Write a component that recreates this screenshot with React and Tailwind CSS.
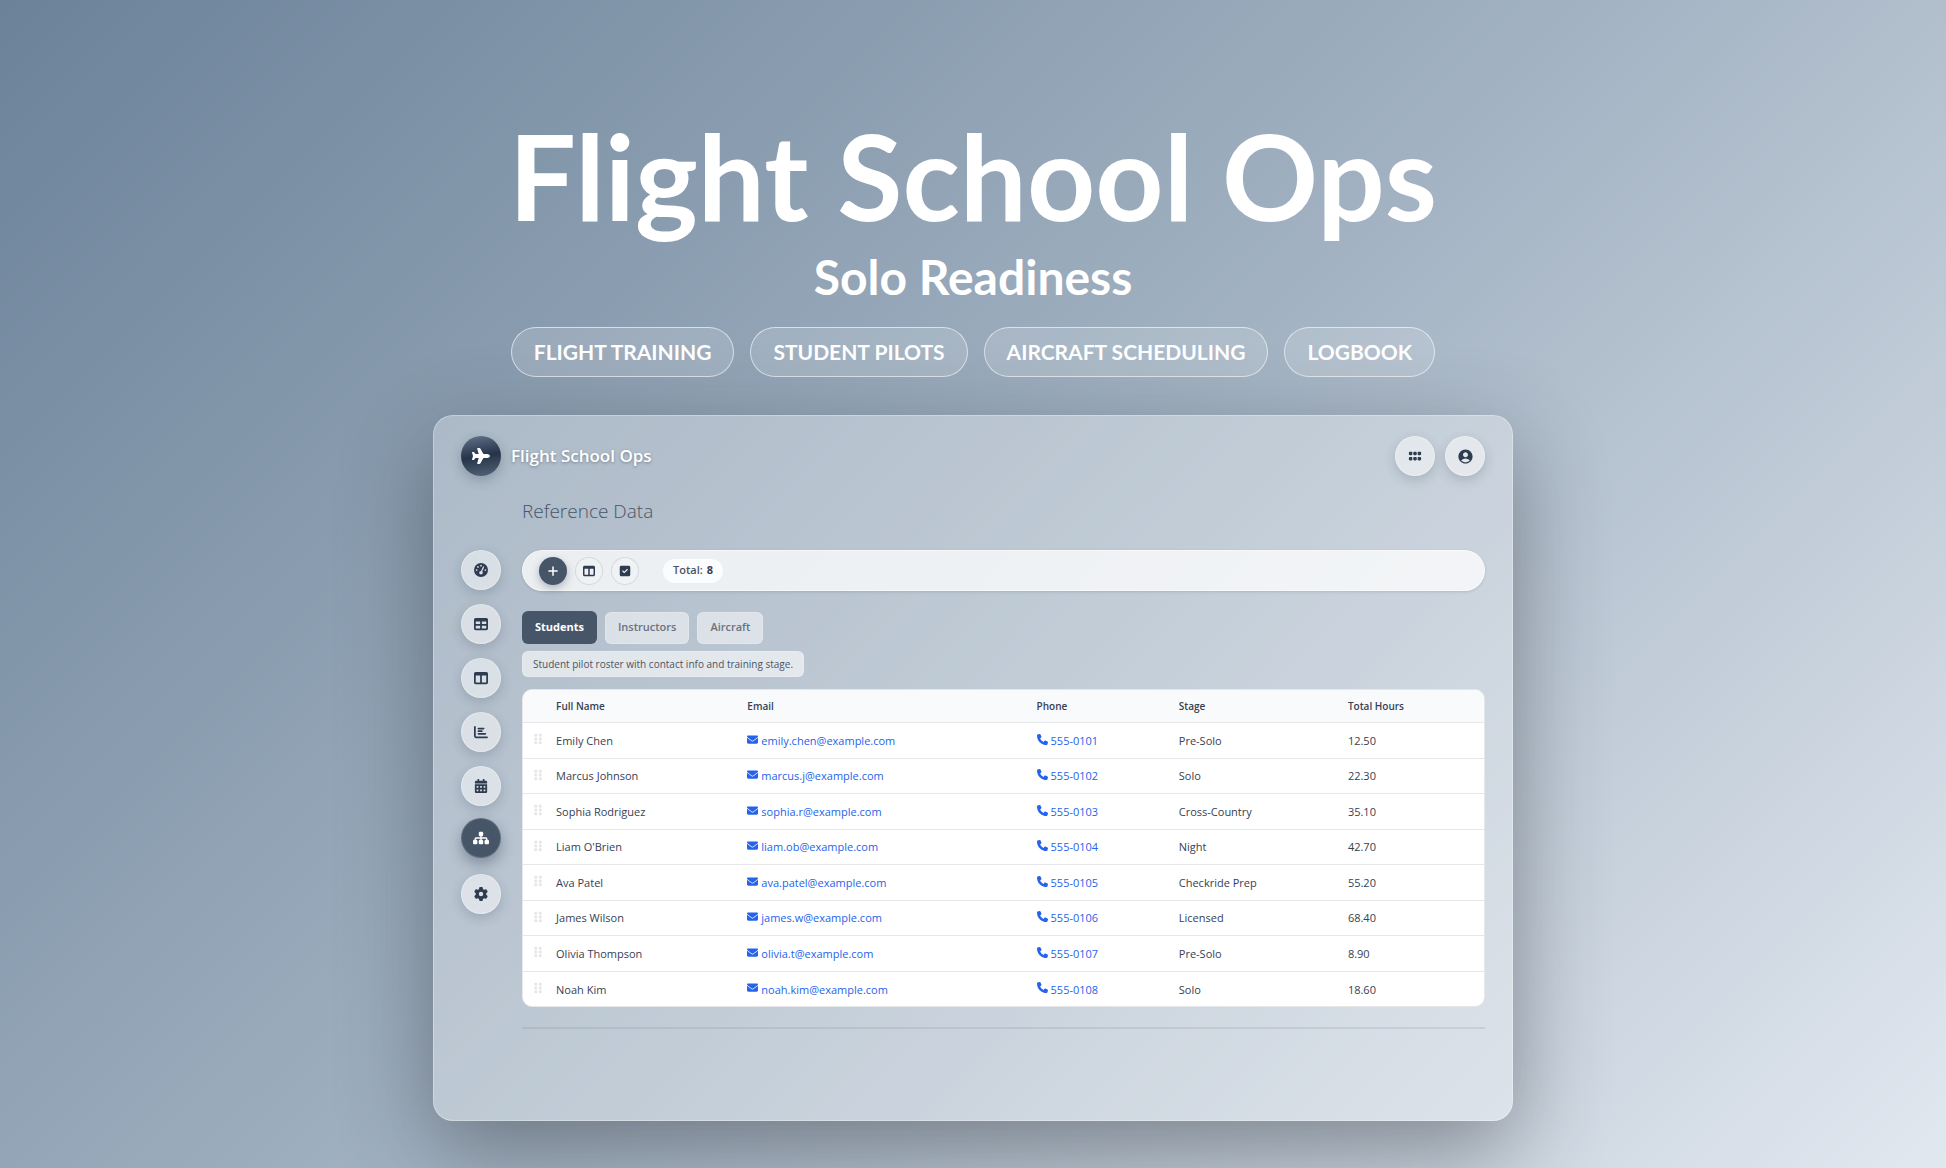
import { FaGaugeHigh, FaTable, FaTableColumns, FaChartBar, FaSitemap, FaGear, FaPlane, FaPlus, FaSquareCheck, FaGripVertical, FaEnvelope, FaPhone, FaGrip } from "react-icons/fa6";
import { FaCalendarAlt } from "react-icons/fa";
import { MdAccountCircle } from "react-icons/md";

const tags = ["FLIGHT TRAINING", "STUDENT PILOTS", "AIRCRAFT SCHEDULING", "LOGBOOK"];

const navItems = [
  { label: "Dashboard", Icon: FaGaugeHigh },
  { label: "Table", Icon: FaTable },
  { label: "Board", Icon: FaTableColumns },
  { label: "Reports", Icon: FaChartBar },
  { label: "Calendar", Icon: FaCalendarAlt },
  { label: "Reference Data", Icon: FaSitemap, active: true },
  { label: "Settings", Icon: FaGear },
];

const students = [
  ["Emily Chen", "emily.chen@example.com", "555-0101", "Pre-Solo", "12.50"],
  ["Marcus Johnson", "marcus.j@example.com", "555-0102", "Solo", "22.30"],
  ["Sophia Rodriguez", "sophia.r@example.com", "555-0103", "Cross-Country", "35.10"],
  ["Liam O'Brien", "liam.ob@example.com", "555-0104", "Night", "42.70"],
  ["Ava Patel", "ava.patel@example.com", "555-0105", "Checkride Prep", "55.20"],
  ["James Wilson", "james.w@example.com", "555-0106", "Licensed", "68.40"],
  ["Olivia Thompson", "olivia.t@example.com", "555-0107", "Pre-Solo", "8.90"],
  ["Noah Kim", "noah.kim@example.com", "555-0108", "Solo", "18.60"],
];

const glass =
  "flex size-10 items-center justify-center rounded-full border border-white/30 bg-white/50 text-[#2f3b4f] shadow-[0_4px_12px_rgba(30,41,59,0.18)]";

function NavButton({ label, Icon, active }) {
  return (
    <button
      type="button"
      aria-label={label}
      className={
        active
          ? "-mt-0.5 mb-0.5 flex size-10 items-center justify-center rounded-full border border-white/15 bg-[#475569] text-white shadow-[0_6px_14px_rgba(30,41,59,0.35)]"
          : glass
      }
    >
      <Icon className={active ? "size-4" : "size-3.5"} />
    </button>
  );
}

function Hero() {
  return (
    <header className="flex flex-col items-center font-['Century_Gothic','Lato',sans-serif] font-bold text-white">
      <h1 className="text-[119px] leading-[140px]">Flight School Ops</h1>
      <p className="mt-1 text-[48px] leading-[56px]">Solo Readiness</p>
      <ul className="mt-[22px] flex flex-wrap justify-center gap-4">
        {tags.map((tag) => (
          <li
            key={tag}
            className="flex h-[50px] items-center rounded-full border border-white/60 bg-white/15 px-[22px] text-[21px]"
          >
            {tag}
          </li>
        ))}
      </ul>
    </header>
  );
}

function Toolbar() {
  const small =
    "flex size-7 items-center justify-center rounded-full border border-black/10 bg-white/20 text-[#2f3b4f]";
  return (
    <div className="flex h-[41px] items-center gap-2 rounded-full border border-white/50 bg-white/75 px-4 shadow-[0_1px_3px_rgba(30,41,59,0.15)]">
      <button type="button" aria-label="Add" className="flex size-7 items-center justify-center rounded-full bg-[#475569] text-white shadow-[0_3px_8px_rgba(30,41,59,0.3)]">
        <FaPlus className="size-3" />
      </button>
      <button type="button" aria-label="Columns" className={small}>
        <FaTableColumns className="size-3" />
      </button>
      <button type="button" aria-label="Select" className={small}>
        <FaSquareCheck className="size-3" />
      </button>
      <span className="ml-4 flex h-6 items-center gap-1 rounded-full bg-white/80 px-2.5 text-[11px] font-semibold text-gray-600">
        Total: <b className="font-bold text-gray-700">8</b>
      </span>
    </div>
  );
}

function Tabs() {
  const idle =
    "h-8 rounded-md border border-white/20 bg-white/50 px-3 text-[11px] font-semibold text-gray-500";
  return (
    <div role="tablist" className="mt-5 flex items-center gap-2">
      <button type="button" role="tab" aria-selected="true" className="h-[33px] rounded-md bg-[#475569] px-[13px] text-[11px] font-bold text-white">
        Students
      </button>
      <button type="button" role="tab" aria-selected="false" className={idle}>Instructors</button>
      <button type="button" role="tab" aria-selected="false" className={idle}>Aircraft</button>
    </div>
  );
}

function StudentTable() {
  return (
    <div className="mt-3 overflow-hidden rounded-[10px] border border-gray-200 bg-white">
      <table className="w-full table-fixed text-left text-[11px] text-gray-700">
        <colgroup>
          <col className="w-[2.4%]" />
          <col className="w-[19.9%]" />
          <col className="w-[30.1%]" />
          <col className="w-[14.8%]" />
          <col className="w-[17.6%]" />
          <col />
        </colgroup>
        <thead>
          <tr className="h-8 border-b border-gray-200 bg-slate-50 text-[10px] text-gray-700">
            <th aria-label="Reorder" />
            {["Full Name", "Email", "Phone", "Stage", "Total Hours"].map((h) => (
              <th key={h} className="px-2.5 pt-0.5 font-semibold">{h}</th>
            ))}
          </tr>
        </thead>
        <tbody>
          {students.map(([name, email, phone, stage, hours]) => (
            <tr key={email} className="border-b border-gray-200 odd:h-9 even:h-[35px] last:border-0 [&>td]:pt-0.5">
              <td className="pl-[9px]"><FaGripVertical className="mb-1 size-3 text-gray-200" /></td>
              <td className="px-2.5">{name}</td>
              <td className="px-2.5">
                <a href={`mailto:${email}`} className="flex items-center gap-[3px] text-[#2563eb]">
                  <FaEnvelope className="mb-1 size-[11px]" />{email}
                </a>
              </td>
              <td className="px-2.5">
                <a href={`tel:${phone}`} className="flex items-center gap-[3px] text-[#2563eb]">
                  <FaPhone className="mb-1 size-[11px]" />{phone}
                </a>
              </td>
              <td className="px-2.5">{stage}</td>
              <td className="px-2.5">{hours}</td>
            </tr>
          ))}
        </tbody>
      </table>
    </div>
  );
}

export default function App() {
  return (
    <div className="flex min-h-screen flex-col items-center overflow-hidden bg-[linear-gradient(135deg,#6b8299_0%,#a1b1c1_50%,#e2e8f0_100%)] px-8 pt-[105px] pb-[47px]">
      <Hero />
      <main className="mt-[38px] flex w-full max-w-[1080px] grow flex-col rounded-[20px] border border-white/30 bg-white/30 px-[27px] pt-5 font-['Segoe_UI','Open_Sans',sans-serif] shadow-[0_30px_90px_rgba(40,45,50,0.45)]">
        <div className="flex items-center gap-2.5">
          <span className="flex size-10 items-center justify-center rounded-full bg-[linear-gradient(170deg,#64748b_0%,#26344a_50%,#56657a_100%)] text-white shadow-[0_4px_12px_rgba(30,41,59,0.25)]">
            <FaPlane className="size-[18px]" />
          </span>
          <span className="grow text-[17px] font-semibold text-white [text-shadow:0_1px_3px_rgba(30,41,59,0.4)]">Flight School Ops</span>
          <button type="button" aria-label="Apps" className={glass}><FaGrip className="size-3.5" /></button>
          <button type="button" aria-label="Account" className={glass}><MdAccountCircle className="size-[17px]" /></button>
        </div>
        <h2 className="mt-5 ml-[61px] text-[19px] leading-[30px] font-light text-[#475569]">Reference Data</h2>
        <div className="mt-6 flex gap-[21px]">
          <nav className="flex flex-col gap-3.5">
            {navItems.map((item) => <NavButton key={item.label} {...item} />)}
          </nav>
          <section className="min-w-0 grow">
            <Toolbar />
            <Tabs />
            <p className="mt-[7px] w-fit rounded-md border border-white/20 bg-white/60 px-2.5 text-[10px] leading-6 text-gray-600">
              Student pilot roster with contact info and training stage.
            </p>
            <StudentTable />
            <hr className="mt-5 border-t-2 border-slate-500/15" />
          </section>
        </div>
      </main>
    </div>
  );
}
